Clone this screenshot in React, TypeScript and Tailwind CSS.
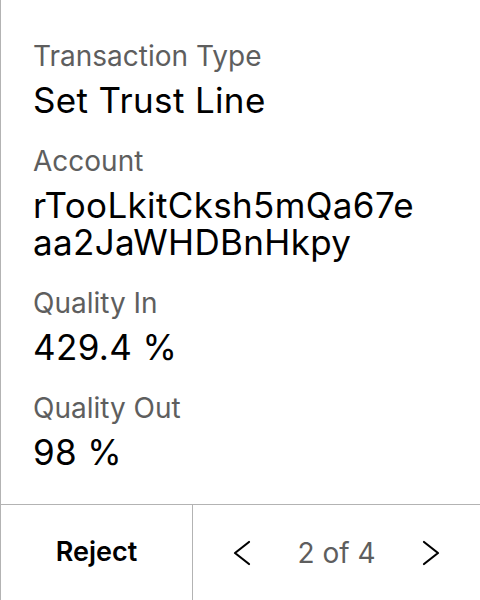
const fields = [
  { label: 'Transaction Type', value: 'Set Trust Line' },
  { label: 'Account', value: 'rTooLkitCksh5mQa67eaa2JaWHDBnHkpy' },
  { label: 'Quality In', value: '429.4 %' },
  { label: 'Quality Out', value: '98 %' },
];

function Chevron({ dir }: { dir: 'left' | 'right' }) {
  return (
    <svg width="18" height="26" viewBox="0 0 18 26" fill="none" stroke="black" strokeWidth="2.2" strokeLinecap="round" strokeLinejoin="round">
      {dir === 'left' ? <polyline points="16,2 2,13 16,24" /> : <polyline points="2,2 16,13 2,24" />}
    </svg>
  );
}

export default function App() {
  return (
    <div
      className="w-[480px] h-[600px] flex flex-col bg-white border-l border-[#b3b3b3]"
      style={{ fontFamily: 'Inter, "Noto Sans", sans-serif' }}
    >
      <div className="flex-1 pl-8 pr-[60px] pt-[36px] flex flex-col gap-[22px]">
        {fields.map((f) => (
          <div key={f.label} className="flex flex-col">
            <span className="text-[28px] leading-[40px] text-[#5e5e5e]">{f.label}</span>
            <span className="mt-[6px] text-[35px] leading-[37px] tracking-[0.01em] text-black break-all">{f.value}</span>
          </div>
        ))}
      </div>
      <div className="h-[96px] flex border-t border-[#b3b3b3]">
        <button className="w-[192px] flex items-center justify-center border-r border-[#b3b3b3] text-[27px] font-semibold text-black">
          Reject
        </button>
        <div className="flex-1 flex items-center justify-center gap-[46px]">
          <Chevron dir="left" />
          <span className="text-[28px] text-[#5e5e5e]">2 of 4</span>
          <Chevron dir="right" />
        </div>
      </div>
    </div>
  );
}
